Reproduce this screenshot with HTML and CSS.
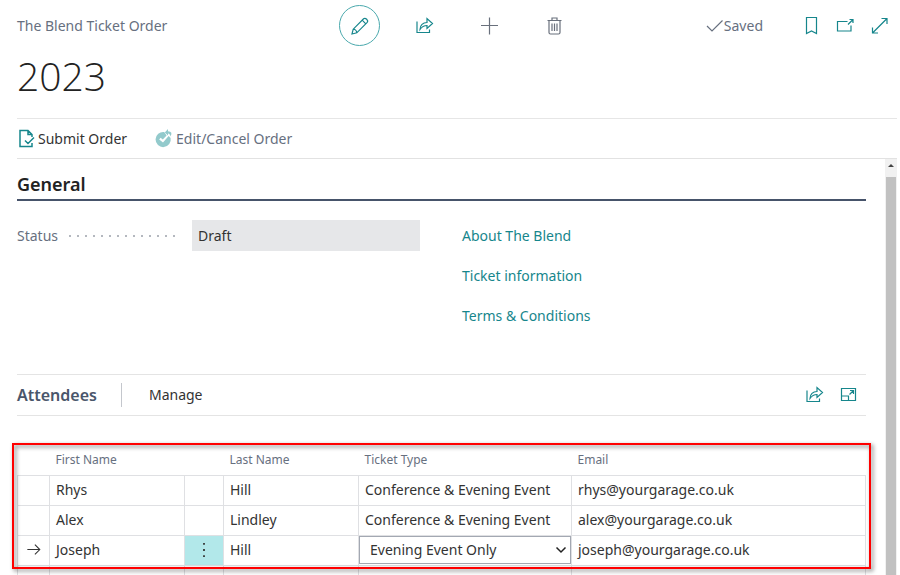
FILE: index.html
```html
<!DOCTYPE html>
<html lang="en">
<head>
<meta charset="utf-8">
<title>The Blend Ticket Order</title>
<link rel="stylesheet" href="styles.css">
</head>
<body>
<svg width="0" height="0" class="symbols" aria-hidden="true">
  <symbol id="share" viewBox="0 0 18 18"><path d="M1 4.5V15.5H13.5V12.5M4 12.5C4 8 7 5.5 11 5.5V1.5L16.5 6.5L11 11.5V8.5C8 8.5 6 9.5 4 12.5Z"/></symbol>
</svg>
<div class="page">
  <header class="topbar">
    <span class="page-name">The Blend Ticket Order</span>
    <div class="tools">
      <button class="tool tool-active" aria-label="Edit"><svg viewBox="0 0 18 18"><path d="M1 17L2.2 12.2L12.6 1.8C14.4 0.2 17.8 3.4 16.2 5.4L5.8 15.8ZM11.2 3.2L14.8 6.8M2.2 12.2C3.8 12.2 5.6 13.8 5.8 15.8"/></svg></button>
      <button class="tool" aria-label="Share"><svg viewBox="0 0 18 18"><use href="#share"/></svg></button>
      <button class="tool tool-grey" aria-label="New"><svg viewBox="0 0 18 18"><path d="M8.5 0.5V17.5M0 8.5H17"/></svg></button>
      <button class="tool tool-grey" aria-label="Delete"><svg viewBox="0 0 18 18"><path d="M1.5 3.5H15.5M6 3V1H11V3M3 3.5V15.5Q3 17 4.5 17H12.5Q14 17 14 15.5V3.5M6 6.5V14M8.5 6.5V14M11 6.5V14"/></svg></button>
    </div>
    <div class="status-tools">
      <span class="saved"><svg viewBox="0 0 18 18"><path d="M1 9L6 14L16.5 3.5"/></svg>Saved</span>
      <button class="mini" aria-label="Bookmark"><svg viewBox="0 0 18 18"><path d="M3.5 0.5H13.5V16.5L8.5 14L3.5 16.5Z"/></svg></button>
      <button class="mini" aria-label="Open in new window"><svg viewBox="0 0 18 18"><path d="M10.5 4.5H0.5V14H14V8.5M11 7.5L16 2.5M12.5 2.5H16V6"/></svg></button>
      <button class="mini" aria-label="Expand"><svg viewBox="0 0 18 18"><path d="M1.5 16L16 1.5M10.5 1.5H16V7M1.5 10.5V16H7"/></svg></button>
    </div>
  </header>
  <h1>2023</h1>
  <nav class="actions">
    <button class="action"><svg viewBox="0 0 18 18"><path class="bold" d="M15 13V16.5H3V0.5H11L15 4.5V7M11 0.5V4.5H15M8 10.5L11 13.5L17 7.5"/></svg>Submit Order</button>
    <button class="action action-off"><svg viewBox="0 0 18 18"><path class="disc" d="M9.2 2A7.6 7.6 0 1 0 15.6 8L13.6 6L8 12.4L4.2 9.4L5.6 7.8L7.8 9.6L11.6 5.4Z"/><path class="disc" d="M13 -1L9.8 2.4L13 5.6V3.4Q15 3.4 15.4 6.4Q18.4 1.6 13 1.2Z"/></svg>Edit/Cancel Order</button>
  </nav>
  <div class="body">
    <main class="content">
      <h2 class="general">General</h2>
      <div class="fields">
        <div class="field">
          <label for="status">Status</label><span class="dots"></span>
          <input id="status" value="Draft" readonly>
        </div>
        <div class="links">
          <a href="#">About The Blend</a>
          <a href="#">Ticket information</a>
          <a href="#">Terms &amp; Conditions</a>
        </div>
      </div>
      <div class="part-bar">
        <h2>Attendees</h2>
        <button class="manage">Manage</button>
        <button class="mini" aria-label="Share attendees"><svg viewBox="0 0 18 18"><use href="#share"/></svg></button>
        <button class="mini" aria-label="Focus mode"><svg viewBox="0 0 18 18"><path d="M1.5 10V2.5H15.5V14.5H8.5M1.5 10H8.5V14.5H1.5ZM9.5 8.5L13.5 4.5M10 4.5H13.5V8"/></svg></button>
      </div>
      <div class="grid-wrap">
        <table>
          <colgroup><col class="c-sel"><col class="c-name"><col class="c-menu"><col class="c-name"><col class="c-type"><col></colgroup>
          <thead><tr><th></th><th>First Name</th><th></th><th>Last Name</th><th>Ticket Type</th><th>Email</th></tr></thead>
          <tbody>
            <tr><td></td><td>Rhys</td><td></td><td>Hill</td><td>Conference &amp; Evening Event</td><td>rhys@yourgarage.co.uk</td></tr>
            <tr><td></td><td>Alex</td><td></td><td>Lindley</td><td>Conference &amp; Evening Event</td><td>alex@yourgarage.co.uk</td></tr>
            <tr>
              <td class="icon-cell"><svg viewBox="0 0 18 18"><path d="M1.5 8.5H15.5M10 3L15.5 8.5L10 14"/></svg></td>
              <td>Joseph</td>
              <td class="icon-cell menu-cell"><button aria-label="Row menu"><svg viewBox="0 0 18 18"><path d="M8 1h2v2H8zM8 8h2v2H8zM8 15h2v2H8z"/></svg></button></td>
              <td>Hill</td>
              <td class="select-cell"><div class="picker"><select aria-label="Ticket Type"><option>Evening Event Only</option><option>Conference &amp; Evening Event</option></select><svg viewBox="0 0 12 12"><path d="M1.5 3.5L6 8L10.5 3.5"/></svg></div></td>
              <td>joseph@yourgarage.co.uk</td>
            </tr>
            <tr><td></td><td></td><td></td><td></td><td></td><td></td></tr>
          </tbody>
        </table>
        <div class="highlight"></div>
      </div>
    </main>
    <div class="scrollbar"><svg viewBox="0 0 12 18"><path d="M3 8L6 5L9 8Z"/></svg><div class="thumb"></div></div>
  </div>
</div>
</body>
</html>
```
FILE: styles.css
```css
* { box-sizing: border-box; }
body {
  margin: 0;
  background: #fff;
  color: #333;
  font: 14px/20px "Noto Sans", "Open Sans", sans-serif;
}
.symbols { position: absolute; }
button, select, input { font: inherit; color: inherit; border: 0; padding: 0; margin: 0; background: none; }
svg { width: 18px; height: 18px; flex: none; display: block; overflow: visible; fill: none; stroke: currentColor; stroke-width: 1.2; }
h1, h2 { margin: 0; }
.page { height: 100vh; overflow: hidden; padding: 5px 3px 0 17px; display: flex; flex-direction: column; }

.topbar { display: grid; grid-template-columns: 1fr auto 1fr; align-items: center; }
.page-name { color: #67707f; }
.tools { display: flex; gap: 24px; color: #16868c; }
.tool { width: 41px; height: 41px; display: grid; place-items: center; border-radius: 50%; }
.tool-active { border: 1px solid #4aa9ad; }
.tool-grey { color: #69707c; }
.status-tools { display: flex; justify-content: flex-end; align-items: center; gap: 16px; padding-right: 8px; color: #16868c; }
.saved { display: flex; align-items: center; color: #67707f; margin-right: 24px; }
.mini { color: #16868c; }

h1 { color: #222; font-weight: 300; font-family: "Open Sans", "Noto Sans", sans-serif; font-size: 39px; line-height: 60px; padding-bottom: 12px; border-bottom: 1px solid #e6e6e6; }
.actions { display: flex; gap: 28px; height: 40px; border-bottom: 1px solid #e2e2e2; flex: none; }
.action { display: flex; align-items: center; gap: 3px; }
.action svg { color: #16868c; }
.action-off { color: #67707f; }
.action .bold { stroke-width: 1.5; }
.action .disc { fill: #93cacc; stroke: none; }

.body { flex: 1; min-height: 0; display: flex; gap: 19px; }
.content { flex: 1; min-width: 0; }
.general { color: #222; font-size: 18px; font-weight: 600; line-height: 24px; padding: 13px 0 3px; border-bottom: 2px solid #46536a; }
.fields { display: grid; grid-template-columns: 403px 1fr; gap: 42px; padding: 19px 0 48px; }
.field { display: flex; align-items: center; align-self: start; }
.field label { color: #67707f; }
.dots { flex: 1; height: 2px; margin: 0 11px 0 8px; background: radial-gradient(circle, #b4b8bf 1px, transparent 1px) 0 0 / 8px 2px; }
.field input { width: 228px; height: 31px; padding: 0 6px; background: #e6e7e9; }
.links { display: grid; gap: 20px; padding-top: 6px; }
.links a { color: #16868c; text-decoration: none; justify-self: start; }

.part-bar { display: flex; align-items: center; height: 42px; border: solid #e4e4e4; border-width: 1px 0; padding-right: 8px; gap: 16px; }
.part-bar h2 { color: #4a566b; font-size: 16px; font-weight: 600; padding-right: 8px; }
.manage { border-left: 1px solid #c4c7cd; height: 24px; padding-left: 27px; margin-right: auto; }

.grid-wrap { position: relative; margin-top: 30px; }
table { width: 100%; border-collapse: collapse; table-layout: fixed; }
.c-sel { width: 32px; }
.c-name { width: 135px; }
.c-menu { width: 39px; }
.c-type { width: 213px; }
th { height: 29px; padding: 0 6px; text-align: left; font-size: 12px; font-weight: 400; line-height: 16px; color: #67707f; }
td { height: 30px; padding: 0 6px; border: 1px solid #dfe0e3; white-space: nowrap; }
.icon-cell, .select-cell { padding: 0; }
.icon-cell svg { margin: 0 auto; width: 16px; height: 16px; }
.menu-cell { background: #b2e8ea; }
.menu-cell button { display: block; width: 100%; }
.menu-cell svg { fill: #333; stroke: none; }
.picker { display: flex; align-items: center; }
.picker select { appearance: none; flex: 1; height: 28px; padding: 0 10px; border: 1px solid #a3a8b2; background: #fff; }
.picker svg { width: 12px; height: 12px; margin: 0 4px 0 -16px; stroke: #222; stroke-width: 1.5; pointer-events: none; }
.highlight { position: absolute; top: -3px; left: -5px; right: -5px; height: 126px; border: 2px solid #f00; filter: drop-shadow(2px 2px 2px rgba(0, 0, 0, 0.55)); pointer-events: none; }

.scrollbar { width: 12px; background: #f1f1f1; display: flex; flex-direction: column; }
.scrollbar svg { width: 12px; height: 18px; fill: #444; stroke: none; }
.thumb { flex: 1; margin: 0 1px; background: #c1c1c1; }
```
